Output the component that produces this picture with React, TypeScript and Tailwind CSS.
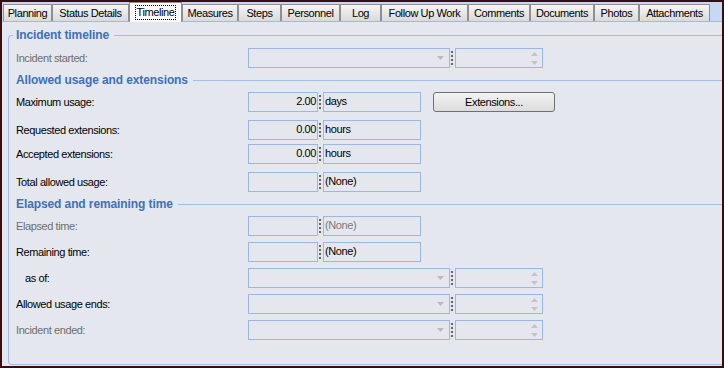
const tabs = [
  { label: 'Planning', w: 'w-[49px]' },
  { label: 'Status Details', w: 'w-[77px]' },
  { label: 'Timeline', w: 'w-[53px]', active: true },
  { label: 'Measures', w: 'w-[56px]' },
  { label: 'Steps', w: 'w-[43px]' },
  { label: 'Personnel', w: 'w-[59px]' },
  { label: 'Log', w: 'w-[41px]' },
  { label: 'Follow Up Work', w: 'w-[87px]' },
  { label: 'Comments', w: 'w-[62px]' },
  { label: 'Documents', w: 'w-[64px]' },
  { label: 'Photos', w: 'w-[45px]' },
  { label: 'Attachments', w: 'w-[71px]' },
];

function Dots() {
  return (
    <div className="flex flex-col gap-[2px] ml-[1px] mr-[2px]">
      {[0, 1, 2, 3].map((i) => (
        <div key={i} className="w-[2px] h-[2px] bg-[#656565]" />
      ))}
    </div>
  );
}

function Combo() {
  return (
    <div className="w-[202px] h-[20px] border border-[#9ab7e6] flex items-center justify-end pr-[5px]">
      <svg width="7" height="4" viewBox="0 0 7 4">
        <path d="M0 0h7L3.5 4z" fill="#b9b9b9" />
      </svg>
    </div>
  );
}

function Spinner() {
  return (
    <div className="w-[88px] h-[20px] border border-[#9ab7e6] flex flex-col items-end justify-center gap-[5px] pr-[4px]">
      <svg width="7" height="4" viewBox="0 0 7 4">
        <path d="M0 4h7L3.5 0z" fill="#c4c4c4" />
      </svg>
      <svg width="7" height="4" viewBox="0 0 7 4">
        <path d="M0 0h7L3.5 4z" fill="#c4c4c4" />
      </svg>
    </div>
  );
}

function ValueUnit({ value, unit, dim }: { value?: string; unit: string; dim?: boolean }) {
  return (
    <>
      <div className="w-[70px] h-[20px] border border-[#9ab7e6] flex items-start justify-end pt-[1px] pr-[1px] leading-[14px]">
        {value}
      </div>
      <Dots />
      <div
        className={`w-[98px] h-[20px] border border-[#9ab7e6] flex items-start pt-[1px] pl-[1px] leading-[14px] ${
          dim ? 'text-[#7a7a7a]' : 'text-black'
        }`}
      >
        {unit}
      </div>
    </>
  );
}

function Row({
  label,
  dim,
  indent,
  className,
  children,
}: {
  label: string;
  dim?: boolean;
  indent?: boolean;
  className?: string;
  children: React.ReactNode;
}) {
  return (
    <div className={`flex items-center h-[20px] ${className ?? ''}`}>
      <div
        className={`w-[232px] ${indent ? 'pl-[9px]' : ''} ${dim ? 'text-[#6d6d6d]' : 'text-black'}`}
      >
        {label}
      </div>
      {children}
    </div>
  );
}

function Header({ title }: { title: string }) {
  return (
    <div className="mt-[5px] h-[14px] flex items-center">
      <span className="text-[12px] font-bold text-[#3f70b8] tracking-[-0.1px] leading-[14px]">{title}</span>
      <div className="flex-1 h-px bg-[#a0bfea] ml-[5px]" />
    </div>
  );
}

export default function App() {
  return (
    <div className="w-[724px] h-[368px] border-2 border-[#3b0c0c] bg-[#c5d8f5] flex flex-col overflow-hidden font-['Liberation_Sans',Arial,sans-serif] text-[11px] tracking-[-0.4px] text-black">
      <div className="h-[19px] shrink-0 flex items-end pl-[1px]">
        {tabs.map((t) =>
          t.active ? (
            <div
              key={t.label}
              className={`${t.w} h-[20px] -mb-px relative z-10 flex items-start justify-center pt-[2px] border border-b-0 border-[#8d8f92] bg-[#fafafa]`}
            >
              <span className="border border-dotted border-black px-[1px] leading-[13px]">{t.label}</span>
            </div>
          ) : (
            <div
              key={t.label}
              className={`${t.w} h-[17px] flex items-center justify-center border border-b-0 border-[#8d8f92] bg-linear-to-b from-[#f5f5f5] to-[#dadada] leading-[13px]`}
            >
              {t.label}
            </div>
          )
        )}
      </div>
      <div className="flex-1 flex flex-col bg-[#e4e8ee] border-t border-[#a7b8d0] pl-[6px] pt-[6px]">
        <fieldset className="flex-1 mb-[1px] border border-r-0 border-[#9fbdea] rounded-l-[4px] pl-[7px]">
          <legend className="-ml-[3px] pl-[3px] pr-[5px] text-[12px] font-bold text-[#3f70b8] tracking-[-0.1px] leading-[14px]">
            Incident timeline
          </legend>
          <div className="flex flex-col pt-[6px]">
            <Row label="Incident started:" dim>
              <Combo />
              <Dots />
              <Spinner />
            </Row>

            <Header title="Allowed usage and extensions" />
            <Row label="Maximum usage:" className="mt-[5px]">
              <ValueUnit value="2.00" unit="days" />
              <button className="ml-[12px] w-[122px] h-[20px] rounded-[3px] border border-[#707070] bg-linear-to-b from-[#f3f3f3] to-[#dcdcdc] text-black leading-[14px]">
                Extensions...
              </button>
            </Row>
            <Row label="Requested extensions:" className="mt-[8px]">
              <ValueUnit value="0.00" unit="hours" />
            </Row>
            <Row label="Accepted extensions:" className="mt-[4px]">
              <ValueUnit value="0.00" unit="hours" />
            </Row>
            <Row label="Total allowed usage:" className="mt-[8px]">
              <ValueUnit unit="(None)" />
            </Row>

            <Header title="Elapsed and remaining time" />
            <Row label="Elapsed time:" dim className="mt-[5px]">
              <ValueUnit unit="(None)" dim />
            </Row>
            <Row label="Remaining time:" className="mt-[6px]">
              <ValueUnit unit="(None)" />
            </Row>
            <Row label="as of:" indent className="mt-[6px]">
              <Combo />
              <Dots />
              <Spinner />
            </Row>
            <Row label="Allowed usage ends:" className="mt-[6px]">
              <Combo />
              <Dots />
              <Spinner />
            </Row>
            <Row label="Incident ended:" dim className="mt-[6px]">
              <Combo />
              <Dots />
              <Spinner />
            </Row>
          </div>
        </fieldset>
      </div>
    </div>
  );
}
